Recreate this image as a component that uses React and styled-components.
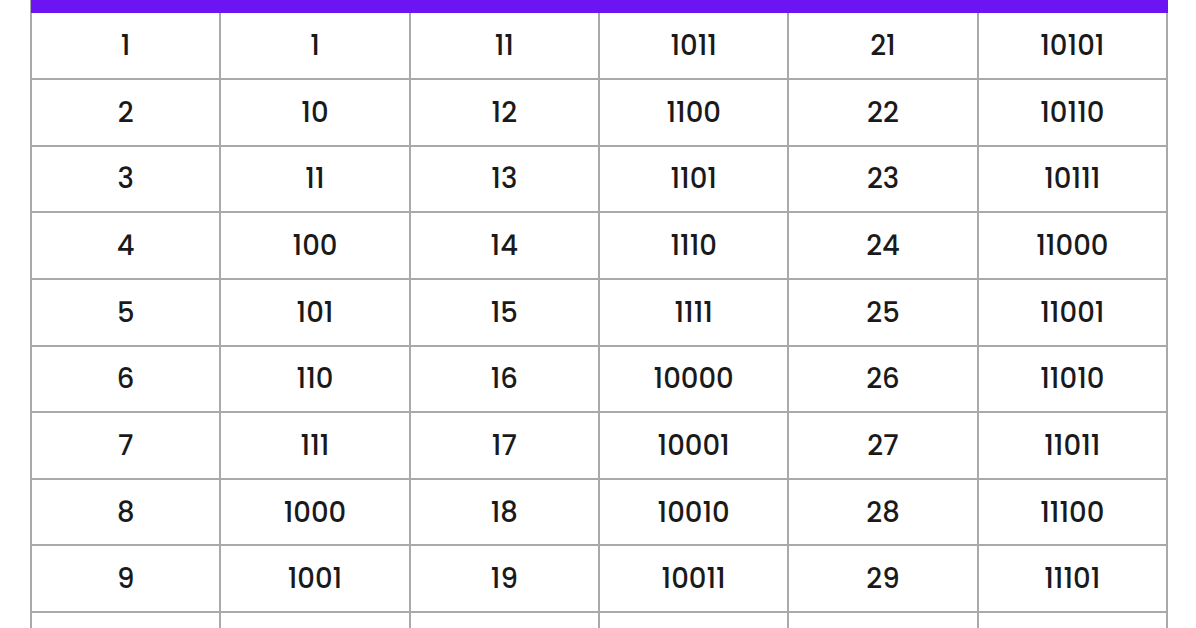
import React from "react";
import styled, { createGlobalStyle } from "styled-components";

const GlobalStyle = createGlobalStyle`
  html, body {
    margin: 0;
    padding: 0;
    background: #ffffff;
    overflow: hidden;
  }
  body {
    font-family: "Poppins", Inter, "Noto Sans", sans-serif;
  }
`;

const Page = styled.div`
  width: 1196px;
  height: 628px;
  overflow: hidden;
  padding-left: 30px;
  box-sizing: border-box;
`;

const Table = styled.div`
  width: 1138px;
  display: grid;
  grid-template-columns: repeat(6, 1fr);
  border-left: 2px solid #a9a9a9;
  box-sizing: border-box;
`;

const HeaderBar = styled.div`
  grid-column: 1 / -1;
  height: 13.4px;
  margin-left: -1px;
  background: #6c14f2;
`;

const Cell = styled.div`
  height: 66.625px;
  box-sizing: border-box;
  border-right: 2px solid #a9a9a9;
  border-bottom: 2px solid #a9a9a9;
  display: flex;
  align-items: center;
  justify-content: center;
  padding-top: 1px;
  font-size: 27.5px;
  font-weight: 500;
  color: #1a1a1a;
`;

const toBinary = (n) => n.toString(2);

// nine rows fit the view; the tenth only shows its top edge
const rows = Array.from({ length: 9 }, (_, i) => i + 1);

export default function App() {
  return (
    <Page>
      <GlobalStyle />
      <Table>
        <HeaderBar />
        {rows.map((n) => (
          <React.Fragment key={n}>
            <Cell>{n}</Cell>
            <Cell>{toBinary(n)}</Cell>
            <Cell>{n + 10}</Cell>
            <Cell>{toBinary(n + 10)}</Cell>
            <Cell>{n + 20}</Cell>
            <Cell>{toBinary(n + 20)}</Cell>
          </React.Fragment>
        ))}
        {Array.from({ length: 6 }, (_, i) => (
          <Cell key={`last-${i}`} />
        ))}
      </Table>
    </Page>
  );
}
